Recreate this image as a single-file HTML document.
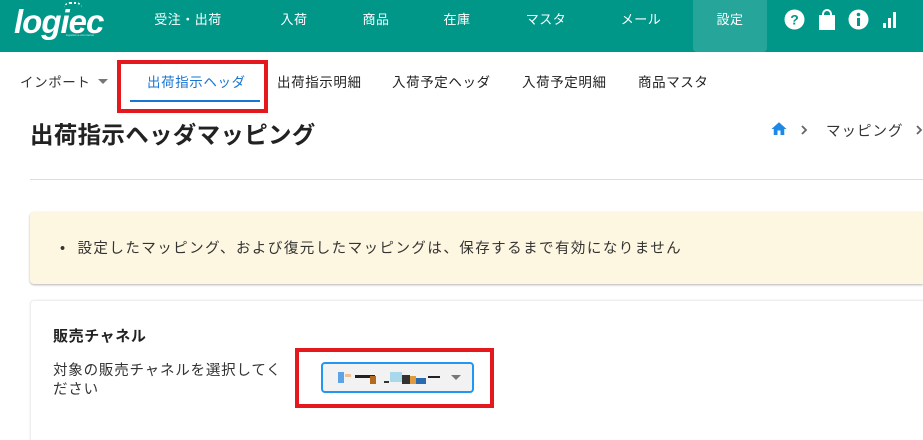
<!DOCTYPE html>
<html><head><meta charset="utf-8"><style>
*{margin:0;padding:0;box-sizing:border-box}
html,body{width:923px;height:440px;overflow:hidden}
body{background:#fff;font-family:"Liberation Sans","Noto Sans CJK JP",sans-serif;color:#222;position:relative}
.hdr{position:absolute;left:0;top:0;width:923px;height:52px;background:#009688}
.nav{position:absolute;top:0;height:52px;line-height:40px;color:#fff;font-size:13px;text-align:center;letter-spacing:0.5px}
.abs{position:absolute;white-space:nowrap}
.sub{font-size:13.5px;letter-spacing:0.6px;top:71px}
</style></head><body>
<div class="hdr">
  <div class="abs" style="left:14px;top:2px;color:#fff;font-size:33px;font-weight:bold;font-style:italic;letter-spacing:-1px;line-height:40px">logiec</div>
  <div class="abs" style="left:66px;top:33px;color:#d0eee9;font-size:3px">logistics e-commerce</div>
  <div class="abs" style="left:64px;top:2px;width:18px;height:6px;border-top:2px dotted #fff;border-radius:10px 10px 0 0"></div>
  <div class="nav" style="left:148px;width:80px">受注・出荷</div>
  <div class="nav" style="left:264px;width:60px">入荷</div>
  <div class="nav" style="left:346px;width:60px">商品</div>
  <div class="nav" style="left:427px;width:60px">在庫</div>
  <div class="nav" style="left:516px;width:60px">マスタ</div>
  <div class="nav" style="left:611px;width:60px">メール</div>
  <div class="nav" style="left:693px;width:74px;background:#26a69a;border-radius:0 0 4px 4px">設定</div>
  <svg class="abs" style="left:784px;top:9px" width="120" height="22" viewBox="0 0 120 22">
    <circle cx="10.5" cy="10.5" r="10" fill="#fff"/>
    <text x="10.5" y="15.5" text-anchor="middle" font-size="14" font-weight="bold" fill="#009688" font-family="Liberation Sans">?</text>
    <path d="M35 6h16v15h-16z" fill="#fff"/><path d="M39 7v-2a4 4 0 0 1 8 0v2" stroke="#fff" stroke-width="2" fill="none"/>
    <circle cx="74.5" cy="10.5" r="10" fill="#fff"/>
    <rect x="73" y="9" width="3" height="8" fill="#009688"/><circle cx="74.5" cy="5.5" r="1.8" fill="#009688"/>
    <rect x="99" y="14" width="3" height="5" fill="#fff"/><rect x="104" y="9" width="3" height="10" fill="#fff"/><rect x="109" y="3" width="3" height="16" fill="#fff"/>
  </svg>
</div>
<div class="abs sub" style="left:20px;color:#333">インポート <span style="display:inline-block;border:5px solid transparent;border-top-color:#777;margin-left:3px;vertical-align:-2px"></span></div>
<div class="abs" style="left:117px;top:60px;width:151px;height:53px;border:4px solid #e3191e"></div>
<div class="abs sub" style="left:147px;color:#1976d2">出荷指示ヘッダ</div>
<div class="abs" style="left:130px;top:100px;width:130px;height:2px;background:#1976d2"></div>
<div class="abs sub" style="left:277px">出荷指示明細</div>
<div class="abs sub" style="left:392px">入荷予定ヘッダ</div>
<div class="abs sub" style="left:522px">入荷予定明細</div>
<div class="abs sub" style="left:638px">商品マスタ</div>
<div class="abs" style="left:30px;top:116px;font-size:23.5px;font-weight:bold;letter-spacing:0.3px;color:#222">出荷指示ヘッダマッピング</div>
<svg class="abs" style="left:769px;top:120px" width="20" height="18" viewBox="0 0 24 24"><path d="M10 20v-6h4v6h5v-8h3L12 3 2 12h3v8z" fill="#1e88e5"/></svg>
<svg class="abs" style="left:799px;top:124px" width="10" height="12" viewBox="0 0 10 12"><path d="M3 2l4 4-4 4" stroke="#666" stroke-width="1.8" fill="none"/></svg>
<div class="abs" style="left:826px;top:120px;font-size:14.5px;letter-spacing:1px;color:#333">マッピング</div>
<svg class="abs" style="left:914px;top:124px" width="10" height="12" viewBox="0 0 10 12"><path d="M3 2l4 4-4 4" stroke="#666" stroke-width="1.8" fill="none"/></svg>
<div class="abs" style="left:30px;top:179px;width:893px;height:1px;background:#ddd"></div>
<div class="abs" style="left:30px;top:212px;width:893px;height:72px;background:#fdf7e1;border-radius:4px 0 0 4px;box-shadow:0 1px 2px rgba(0,0,0,.3)"></div>
<div class="abs" style="left:60px;top:237px;font-size:14.5px;letter-spacing:1.45px;color:#333">•&nbsp; 設定したマッピング、および復元したマッピングは、保存するまで有効になりません</div>
<div class="abs" style="left:30px;top:300px;width:900px;height:150px;border:1px solid #eee;border-radius:4px;box-shadow:0 0 2px rgba(0,0,0,.08)"></div>
<div class="abs" style="left:53px;top:325px;font-size:15px;font-weight:bold;letter-spacing:0.6px;color:#222">販売チャネル</div>
<div class="abs" style="left:53px;top:362px;font-size:14.5px;letter-spacing:0.8px;line-height:19px;color:#333">対象の販売チャネルを選択してく<br>ださい</div>
<div class="abs" style="left:295px;top:348px;width:199px;height:60px;border:4px solid #e3191e"></div>
<div class="abs" style="left:321px;top:362px;width:153px;height:31px;border:2px solid #2196f3;border-radius:4px;background:#f2f2f2"></div>
<div class="abs" style="left:338px;top:372px;width:6px;height:11px;background:#5ba4e8"></div>
<div class="abs" style="left:345px;top:374px;width:6px;height:3px;background:#f0c090"></div>
<div class="abs" style="left:355px;top:375px;width:20px;height:3px;background:#222"></div>
<div class="abs" style="left:370px;top:376px;width:6px;height:8px;background:#b36a20"></div>
<div class="abs" style="left:384px;top:381px;width:5px;height:2px;background:#333"></div>
<div class="abs" style="left:390px;top:372px;width:12px;height:10px;background:#a8d8ea"></div>
<div class="abs" style="left:402px;top:375px;width:8px;height:9px;background:#333"></div>
<div class="abs" style="left:410px;top:376px;width:6px;height:8px;background:#e09a40"></div>
<div class="abs" style="left:416px;top:378px;width:10px;height:6px;background:#2a6bb0"></div>
<div class="abs" style="left:428px;top:376px;width:12px;height:2px;background:#222"></div>
<div class="abs" style="left:451px;top:375px;border:5px solid transparent;border-top-color:#777"></div>
</body></html>
